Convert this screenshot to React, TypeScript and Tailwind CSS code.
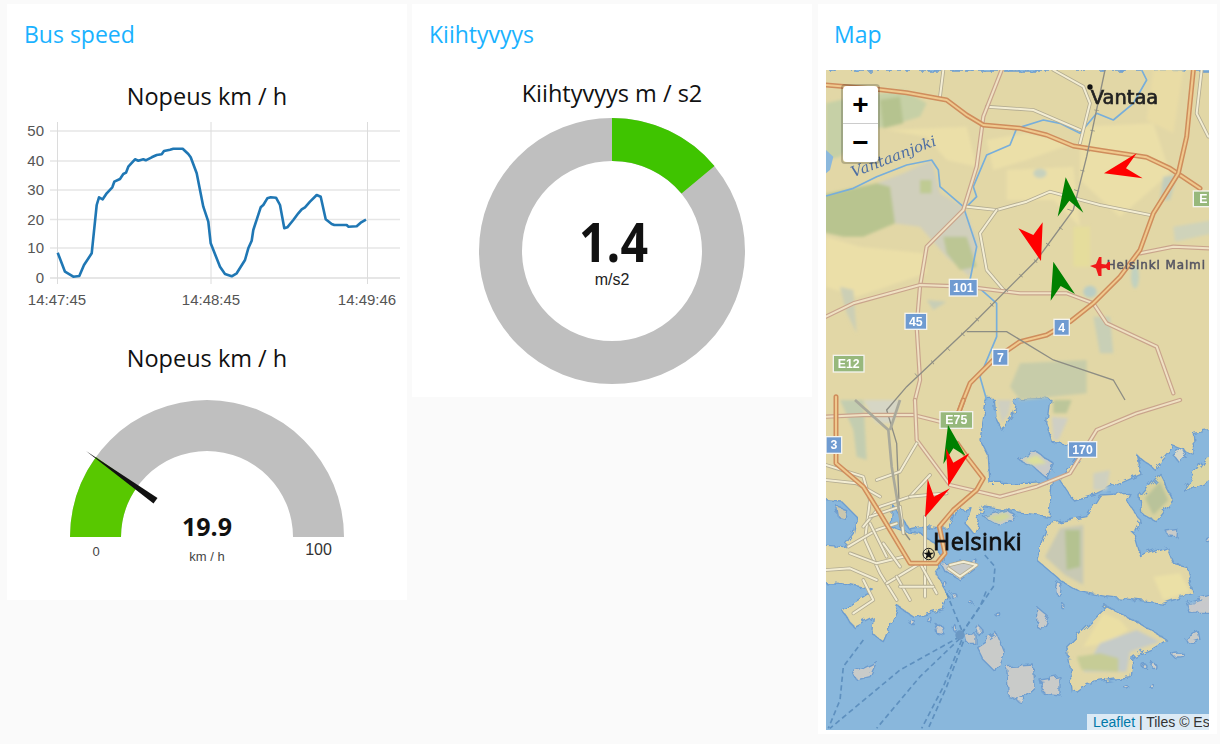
const font = { fontFamily: '"Liberation Sans", Arial, sans-serif' };

const speedRaw = [
  [173,758],[195,815],[220,830],[238,828],[252,795],[275,760],[290,615],[297,592],[308,598],[320,580],[337,562],[343,545],[360,537],[370,522],[378,518],[385,500],[405,478],[415,482],[430,478],[437,481],[455,472],[470,465],[485,463],[492,453],[510,449],[520,446],[548,446],[565,462],[572,472],[590,520],[610,620],[625,665],[632,730],[660,800],[675,822],[695,829],[710,820],[735,780],[745,745],[755,722],[760,690],[782,622],[790,615],[802,595],[812,592],[828,593],[840,615],[853,685],[862,682],[880,660],[895,640],[905,628],[915,622],[930,605],[950,585],[962,590],[977,658],[995,672],[1003,675],[1040,675],[1045,680],[1070,679],[1082,668],[1098,659],
];
const speedLine = speedRaw.map(([x, y]) => `${(x / 3).toFixed(1)},${(y / 3).toFixed(1)}`).join(' ');

const SpeedChart = () => (
  <svg viewBox="7 121 400 200" className="block w-[400px] h-[200px]" style={font}>
    {[278, 248, 219.5, 190, 161, 131].map((y) => (
      <line key={y} x1="50" x2="400" y1={y} y2={y} stroke="#e6e6e6" strokeWidth={y === 278 ? 2 : 1.4} />
    ))}
    {[57.5, 211, 367.5].map((x) => (
      <line key={x} x1={x} x2={x} y1="122" y2="284" stroke="#dcdcdc" strokeWidth="1" />
    ))}
    {[['50', 136], ['40', 166], ['30', 195], ['20', 225], ['10', 253], ['0', 283]].map(([t, y]) => (
      <text key={t} x="44" y={y} textAnchor="end" fontSize="15" fill="#555">{t}</text>
    ))}
    {[['14:47:45', 57], ['14:48:45', 211], ['14:49:46', 367]].map(([t, x]) => (
      <text key={t} x={x} y="305" textAnchor="middle" fontSize="15" fill="#555">{t}</text>
    ))}
    <polyline points={speedLine} fill="none" stroke="#1f77b4" strokeWidth="2.6" strokeLinejoin="round" />
  </svg>
);

const SpeedGauge = () => (
  <svg viewBox="7 383 400 202" className="block w-[400px] h-[202px]">
    <path d="M70 537A137 137 0 0 1 344 537H293A86 86 0 0 0 121 537Z" fill="#bfbfbf" />
    <path d="M70 537A137 137 0 0 1 96 457L137.500 486.500A86 86 0 0 0 121 537Z" fill="#58c800" />
    <polygon points="86,451 157.500,498 153.500,503.500" fill="#111" />
    <text x="207" y="536" textAnchor="middle" fontSize="25" fontWeight="700" fill="#111" fontFamily='"Open Sans", sans-serif'>19.9</text>
    <text x="207" y="561" textAnchor="middle" fontSize="13" fill="#444" style={font}>km / h</text>
    <text x="96" y="556" textAnchor="middle" fontSize="13" fill="#444" style={font}>0</text>
    <text x="318.500" y="555" textAnchor="middle" fontSize="16" fill="#333" style={font}>100</text>
  </svg>
);

const AccelDonut = () => (
  <svg viewBox="412 118 400 272" className="block w-[400px] h-[272px]">
    <circle cx="612" cy="251" r="111.500" fill="none" stroke="#bfbfbf" strokeWidth="43" />
    <path d="M612 118A133 133 0 0 1 714.500 166L681.500 193.500A90 90 0 0 0 612 161Z" fill="#3fc400" />
    <text x="579" y="262" fontSize="54" fontWeight="700" fill="#111" fontFamily='"Open Sans", sans-serif' textLength="69" lengthAdjust="spacingAndGlyphs">1.4</text>
    <text x="612" y="285" textAnchor="middle" fontSize="16" fill="#222" style={font}>m/s2</text>
  </svg>
);

type RoadProps = { d: string; outer: string; inner: string; w: number; iw: number };
const Road = ({ d, outer, inner, w, iw }: RoadProps) => (
  <g fill="none" strokeLinejoin="round" strokeLinecap="round">
    <polyline points={d} stroke={outer} strokeWidth={w} />
    <polyline points={d} stroke={inner} strokeWidth={iw} />
  </g>
);
const Highway = ({ d }: { d: string }) => <Road d={d} outer="#cf8d5c" inner="#efc98e" w={15} iw={6} />;
const Primary = ({ d }: { d: string }) => <Road d={d} outer="#c9a48c" inner="#efe1c3" w={13} iw={6} />;
const Minor = ({ d }: { d: string }) => <Road d={d} outer="#b3ac92" inner="#f3edd3" w={11} iw={6} />;

const Sign = ({ x, y, w, h, t, fill = '#6f9bd1' }: { x: number; y: number; w: number; h: number; t: string; fill?: string }) => (
  <g>
    <rect x={x} y={y} width={w} height={h} fill={fill} stroke="#f3f3ee" strokeWidth="4" />
    <text x={x + w / 2} y={y + h / 2 + 13} textAnchor="middle" fontSize="37" fontWeight="700" fill="#fff" style={font}>{t}</text>
  </g>
);

const Arrow = ({ p, c }: { p: string; c: string }) => <polygon points={p} fill={c} />;

const islands = [
  '595,178 650,155 700,190 680,235 640,200',
  '490,350 560,330 590,350 540,378',
  '365,495 470,480 475,500 420,540 375,515',
  '650,620 685,650 665,690 650,680',
  '470,740 530,700 555,760 530,820 490,780',
  '560,800 640,795 645,860 600,900 565,890',
  '660,840 720,830 720,885 670,880',
  '100,820 170,785 150,830 110,840',
  '1100,610 1200,580 1200,640 1110,640',
  '1095,715 1135,695 1140,720 1105,730',
  '345,670 370,680 375,705 350,700',
  '435,705 465,700 465,730 440,730',
  '1035,390 1070,385 1068,410 1045,408',
];

const specks = [
  [535,645,7,6],[480,695,7,12],[405,685,5,9],[275,665,8,6],[330,660,6,8],[1075,765,18,6],[975,800,6,6],[1002,798,6,8],[920,862,6,5],[993,856,7,5],[400,585,8,7],[375,555,6,8],[455,610,5,4],[715,565,8,20],[1160,415,7,7],[730,620,5,6],[605,900,12,10],
];

const MapArt = () => (
  <svg viewBox="826 70 383 660" className="absolute inset-0 w-[383px] h-[660px] blur-[0.6px]">
    <defs>
      <filter id="rough" x="-10%" y="-10%" width="120%" height="120%">
        <feTurbulence type="fractalNoise" baseFrequency="0.035" numOctaves="3" seed="4" />
        <feDisplacementMap in="SourceGraphic" scale="26" />
      </filter>
      <filter id="soft" x="-10%" y="-10%" width="120%" height="120%">
        <feGaussianBlur stdDeviation="5" />
      </filter>
    </defs>
    <rect x="826" y="70" width="383" height="660" fill="#89b7dc" />

    {/* Water and islands, in coordinates of the lower half */}
    <g transform="translate(820 400) scale(0.33333)">
      <g filter="url(#rough)" stroke="#6e9dcf" strokeWidth="4" strokeLinejoin="round">
        <polygon points="-60,-990 1240,-990 1240,80 1120,100 1125,165 1060,140 1000,205 950,165 960,220 880,255 830,280 760,300 720,240 760,190 800,130 745,135 700,130 680,70 690,-5 590,-5 575,50 545,90 525,50 520,-5 500,-5 480,120 505,170 510,250 640,250 700,245 690,350 620,340 490,320 460,400 435,370 450,320 405,335 385,385 320,380 270,390 215,310 210,380 250,395 300,400 345,430 370,480 345,510 385,590 370,625 280,650 235,620 190,725 155,700 160,650 100,680 65,630 130,590 160,570 60,550 -60,545" fill="#e2d7a6" />
        <polygon points="690,370 800,350 840,285 930,280 920,300 960,360 940,400 960,470 1040,440 1060,490 1100,500 1120,580 1060,600 1030,610 860,590 780,575 720,540 650,480 670,420" fill="#e2d7a6" />
        <polygon points="960,290 1020,220 1060,300 1010,365 965,340" fill="#d8d2a0" />
        <polygon points="1090,270 1160,170 1240,160 1240,200 1120,270" fill="#dcd6a4" />
        <polygon points="1060,165 1090,145 1100,165 1075,185" fill="#d8d8c8" />
        <polygon points="740,740 860,620 900,640 960,670 1040,720 1000,745 940,770 930,830 800,850 760,880 750,800" fill="#e2d7a6" />
        {islands.map((p) => (
          <polygon key={p} points={p} fill="#c9cbc9" />
        ))}
        {specks.map(([x, y, rx, ry]) => (
          <ellipse key={`${x}-${y}`} cx={x} cy={y} rx={rx} ry={ry} fill="#cfd0cc" />
        ))}
        <polygon points="-60,290 60,300 110,350 100,400 70,440 -60,430" fill="#89b7dc" />
        <polygon points="50,320 80,330 75,355 55,350" fill="#c9c7b0" />
      </g>
      <g filter="url(#soft)">
        <polygon points="720,385 790,375 790,555 735,525 675,470" fill="#c8c9b4" />
        <polygon points="735,390 780,390 780,500 740,510" fill="#b4c290" />
        <polygon points="850,640 900,660 925,690 860,730 790,740" fill="#ebdfa4" />
        <polygon points="840,730 950,690 1020,725 930,755 920,815 790,815" fill="#c5cbc8" />
        <polygon points="770,770 840,760 895,775 895,815 785,810" fill="#c6cc96" />
        <polygon points="975,295 1020,245 1045,300 1000,345" fill="#b9c39a" />
        <polygon points="530,0 575,0 565,45 545,70" fill="#cfcfc0" />
        <polygon points="695,50 745,55 715,120 700,120" fill="#cfcfc4" />
        <polygon points="700,0 755,0 740,40 700,40" fill="#bcc69a" />
        <polygon points="820,220 870,210 860,270 820,270" fill="#cfd0bf" />
        <polygon points="610,180 650,165 680,190 640,195" fill="#dcdf9c" />
        <polygon points="500,350 555,338 575,350 535,368" fill="#d0d79c" />
        <polygon points="1000,530 1080,520 1110,575 1030,600" fill="#ebe0a6" />
        <polygon points="60,0 130,0 140,180 110,170 100,90" fill="#c3cdb0" />
        <polygon points="130,0 240,0 220,70 170,70" fill="#d6d6c5" />
        <polygon points="1110,615 1190,595 1190,630 1115,632" fill="#c8c9cc" />
      </g>

      {/* shipping lanes */}
      <g fill="none" stroke="#5e90bf" strokeWidth="5" strokeDasharray="16 10">
        <polyline points="420,710 240,810 30,985" />
        <polyline points="420,715 300,830 170,985" />
        <polyline points="425,720 370,860 305,985" />
        <polyline points="430,725 380,860 325,985" />
        <polyline points="130,720 70,800 60,900 25,985" />
        <polyline points="425,700 520,560 525,500 490,460" />
        <polyline points="425,700 480,620 500,570" />
        <polyline points="425,690 380,580" />
      </g>
      <circle cx="420" cy="705" r="14" fill="#6b98c4" />
    </g>

    {/* Northern terrain and roads */}
    <g transform="translate(820 60) scale(0.33333)">
      <g filter="url(#soft)">
        <polygon points="560,330 760,320 780,500 700,420 560,420" fill="#ebdfa8" />
        <polygon points="780,200 1000,190 1050,340 900,470 780,360" fill="#ebdfa8" />
        <polygon points="1000,30 1090,30 1060,220 980,180" fill="#e9dca5" />
        <polygon points="500,240 620,220 760,250 620,300 520,330" fill="#ebdfa8" />
        <polygon points="200,210 440,200 470,320 380,300 320,230" fill="#ebdfa8" />
        <polygon points="18,530 120,560 310,580 320,640 110,710 18,680" fill="#ebdfa8" />
        <polygon points="18,130 60,120 250,90 320,130 300,170 200,200 130,210 60,290 18,300" fill="#c6d0a6" />
        <polygon points="180,120 240,110 250,190 190,205" fill="#b5c38f" />
        <polygon points="170,370 250,340 335,300 360,400 430,440 475,550 450,650 380,590 300,500 220,490 210,380" fill="#d0cfbc" />
        <polygon points="-20,410 100,385 170,370 210,380 225,490 130,530 70,530 -20,510" fill="#b8c48f" />
        <polygon points="300,360 335,360 335,400 300,400" fill="#bfcb93" />
        <polygon points="370,530 440,530 470,620 420,630 380,580" fill="#bcc694" />
        <polygon points="1060,500 1180,480 1180,520 1065,545" fill="#cfd3ba" />
        <polygon points="1030,350 1070,345 1050,420 1020,420" fill="#c2cdbb" />
        <polygon points="820,770 870,770 880,880 840,880" fill="#c8cfb6" />
        <polygon points="760,500 810,500 810,620 760,620" fill="#e5dd9c" />
        <polygon points="600,910 800,900 800,1000 600,1020 570,980" fill="#c7cca9" />
        <polygon points="60,680 100,690 110,820 80,760" fill="#cccfb5" />
        <polygon points="320,720 380,725 340,750" fill="#c8ceb6" />
        <ellipse cx="810" cy="695" rx="20" ry="18" fill="#b9cdc4" />
        <ellipse cx="660" cy="340" rx="20" ry="14" fill="#c7d1bd" />
        <ellipse cx="945" cy="650" rx="12" ry="35" fill="#c1d1bf" />
      </g>
      <polygon points="18,270 40,290 30,330 18,340" fill="#8bb8dc" />

      {/* rivers */}
      <g fill="none" stroke="#77aedb" strokeWidth="5" strokeLinejoin="round">
        <polyline points="18,408 100,385 170,350 260,315 335,300 355,330 360,380 430,440 470,560 450,660 530,730 530,830 480,950 500,1020" />
        <polyline points="590,205 570,255 500,285 460,380 470,410 440,440" />
        <polyline points="590,205 670,180 720,190 780,220 830,160 880,180 940,130 980,60 965,30" />
      </g>

      <Minor d="370,30 360,110" />
      <Minor d="500,140 640,150 780,210" />
      <Minor d="700,30 790,80 810,130 780,250" />
      <Minor d="440,440 530,450 620,425 690,395 840,435 990,465" />
      <Minor d="530,450 480,520 500,630 555,695" />
      <Minor d="1165,230 1130,160 1145,30" />
      <Primary d="545,30 490,170 470,320 430,450 320,560 300,680 290,800 300,960 285,1020" />
      <Primary d="18,770 100,730 300,675 440,680 600,700 740,700 820,730 860,790 1010,860 1060,1000" />
      <Primary d="1165,565 1060,560 960,580" />
      <Highway d="18,75 170,88 260,98 380,120 440,165 490,195 600,205 680,225 760,258 850,272 980,292 1050,325 1140,385" />
      <Highway d="1120,30 1100,230 1075,340 1000,460 960,570 900,650 820,730 750,785 680,825 600,845 520,900 450,970 430,1020 415,1060 425,1100" />

      {/* rail */}
      <g fill="none" stroke="#8d8d84" strokeWidth="4">
        <polyline points="855,30 800,290 760,450 650,600 450,800 260,980 200,1050 230,1150 240,1400 270,1440" />
        <polyline points="440,815 560,815 700,900 880,960 915,1020" />
        <polyline points="830,150 815,225 797,292 780,358 735,490 690,545 650,600 600,650 505,745 450,800 415,838 365,888 305,930 258,975" strokeDasharray="2 60" strokeWidth="14" />
      </g>
    </g>

    {/* Helsinki roads */}
    <g transform="translate(820 400) scale(0.33333)">
      <Primary d="18,50 130,45 280,45 360,65" />
      <Primary d="285,0 290,120 390,255 540,290 650,260 750,220 830,90 950,40 1080,0" />
      <Minor d="18,195 130,230 150,300 135,420 180,520 230,600" />
      <Minor d="18,240 110,250 180,290" />
      <Minor d="170,240 240,215 290,130" />
      <Minor d="330,225 270,290 180,320 130,380" />
      <Minor d="270,290 380,280" />
      <Minor d="150,350 240,320 250,400" />
      <Minor d="85,440 170,390 230,370" />
      <Minor d="90,460 170,490 250,470" />
      <Minor d="315,350 315,590" />
      <Minor d="200,550 300,490 350,580" />
      <Minor d="230,530 270,600" />
      <Minor d="150,370 200,470" />
      <Minor d="100,640 160,600 130,540" />
      <Minor d="18,510 90,505 170,540" />
      <Minor d="240,560 340,560" />
      <Minor d="190,430 240,500" />
      <Minor d="390,495 430,485 470,495 420,530 385,505" />
      <Highway d="430,0 415,40" />
      <Highway d="48,-10 48,190 130,260 180,340 270,490 350,490 375,460 358,380 400,330 470,270 490,235 440,170 412,130" />
      <g fill="none" stroke="#a9a99b" strokeWidth="8">
        <polyline points="210,90 240,0" />
        <polyline points="105,0 205,90 215,200 245,380" />
      </g>
      <circle cx="326" cy="462" r="17" fill="none" stroke="#222" strokeWidth="3" />
      <polygon points="326,447 330,458 342,458 332,465 336,477 326,470 316,477 320,465 310,458 322,458" fill="#111" />
      <text x="339" y="450" fontSize="70" fill="#111" fontFamily='"Open Sans", sans-serif' textLength="266" stroke="#111" strokeWidth="2.500">Helsinki</text>
      <Sign x={360} y={35} w={98} h={50} t="E75" fill="#97b87c" />
      <Sign x={18} y={110} w={47} h={50} t="3" />
      <Sign x={745} y={125} w={85} h={47} t="170" />
    </g>

    {/* Northern labels and markers */}
    <g transform="translate(820 60) scale(0.33333)">
      <circle cx="810" cy="81" r="8" fill="#111" />
      <text x="812" y="133" fontSize="56" fill="#222" fontFamily='"DejaVu Sans", sans-serif' stroke="#222" strokeWidth="2" textLength="203" lengthAdjust="spacingAndGlyphs">Vantaa</text>
      <text transform="translate(100 352) rotate(-21)" fontSize="44" fontStyle="italic" fill="#4d6ea3" fontFamily='"DejaVu Serif", serif' textLength="270" lengthAdjust="spacingAndGlyphs">Vantaanjoki</text>
      <text x="860" y="628" fontSize="36" fill="#555562" stroke="#555562" strokeWidth="1.500" fontFamily='"DejaVu Sans", sans-serif' textLength="295">Helsinki Malmi</text>
      <Sign x={388} y={658} w={84} h={50} t="101" />
      <Sign x={255} y={760} w={65} h={48} t="45" />
      <Sign x={702} y={778} w={46} h={48} t="4" />
      <Sign x={518} y={868} w={46} h={48} t="7" />
      <Sign x={40} y={886} w={92} h={50} t="E12" fill="#97b87c" />
      <Sign x={1120} y={393} w={60} h={47} t="E" fill="#97b87c" />
    </g>
    <path d="M1090 266L1096 264L1099 257H1101.500L1101.500 264L1106 264.500L1108 262H1110V270H1108L1106 268L1101.500 268.500L1101.500 276H1098.500L1096 268.500Z" fill="#f01818" />

    <g transform="translate(820 60) scale(0.33333)">
      <Arrow c="#ff0000" p="950,280 852,340 968,355 918,325" />
      <Arrow c="#008000" p="737,352 790,458 748,422 713,470" />
      <Arrow c="#ff0000" p="663,603 595,505 640,525 668,487" />
      <Arrow c="#008000" p="700,605 765,702 722,678 692,722" />
    </g>
    <g transform="translate(820 400) scale(0.33333)">
      <Arrow c="#008000" p="384,75 437,168 400,145 370,192" />
      <Arrow c="#ff0000" p="385,258 378,145 400,188 448,160" />
      <Arrow c="#ff0000" p="315,352 323,237 342,290 390,265" />
    </g>
  </svg>
);

const Card = ({ title, className, children }: { title: string; className: string; children: React.ReactNode }) => (
  <div className={`bg-white shrink-0 ${className}`}>
    <h2 className="h-[60px] flex items-center text-[23px] font-medium text-[#1ab2ff]">{title}</h2>
    {children}
  </div>
);

const ChartTitle = ({ children, className }: { children: React.ReactNode; className: string }) => (
  <div className={`h-12 flex items-center justify-center text-[23.500px] font-medium text-[#111] ${className}`}>{children}</div>
);

const App = () => {
  return (
    <div className="w-[1220px] h-[744px] overflow-hidden bg-[#fafafa] flex items-start pl-[7px] pt-1 gap-[5px] font-['Open_Sans',sans-serif]">
      <Card title="Bus speed" className="w-[400px] h-[596px] [&>h2]:pl-[17px]">
        <ChartTitle className="mt-[9px]">Nopeus km / h</ChartTitle>
        <SpeedChart />
        <ChartTitle className="mt-[14px]">Nopeus km / h</ChartTitle>
        <SpeedGauge />
      </Card>

      <Card title="Kiihtyvyys" className="w-[400px] h-[393px] [&>h2]:pl-[17px]">
        <ChartTitle className="mt-[6px]">Kiihtyvyys m / s2</ChartTitle>
        <AccelDonut />
      </Card>

      <Card title="Map" className="w-[399px] h-[730px] ml-px [&>h2]:pl-4">
        <div className="relative w-[383px] h-[660px] ml-2 mt-[6px] overflow-hidden">
          <MapArt />
          <div className="absolute left-[15px] top-[14px] w-[39px] rounded border-2 border-black/20 bg-clip-padding" style={font}>
            <div className="h-[38px] flex items-center justify-center bg-white rounded-t-sm border-b border-[#ccc] text-[28px] font-bold leading-none text-black">+</div>
            <div className="h-[38px] flex items-center justify-center bg-white rounded-b-sm text-[28px] font-bold leading-none text-black">−</div>
          </div>
          <div className="absolute right-0 bottom-0 h-4 w-[122px] pl-[6px] overflow-hidden whitespace-nowrap bg-white/70 text-sm leading-4 text-[#333]" style={font}>
            <span className="text-[#0078a8]">Leaflet</span> | Tiles © Es
          </div>
        </div>
      </Card>
    </div>
  );
};

export default App;
